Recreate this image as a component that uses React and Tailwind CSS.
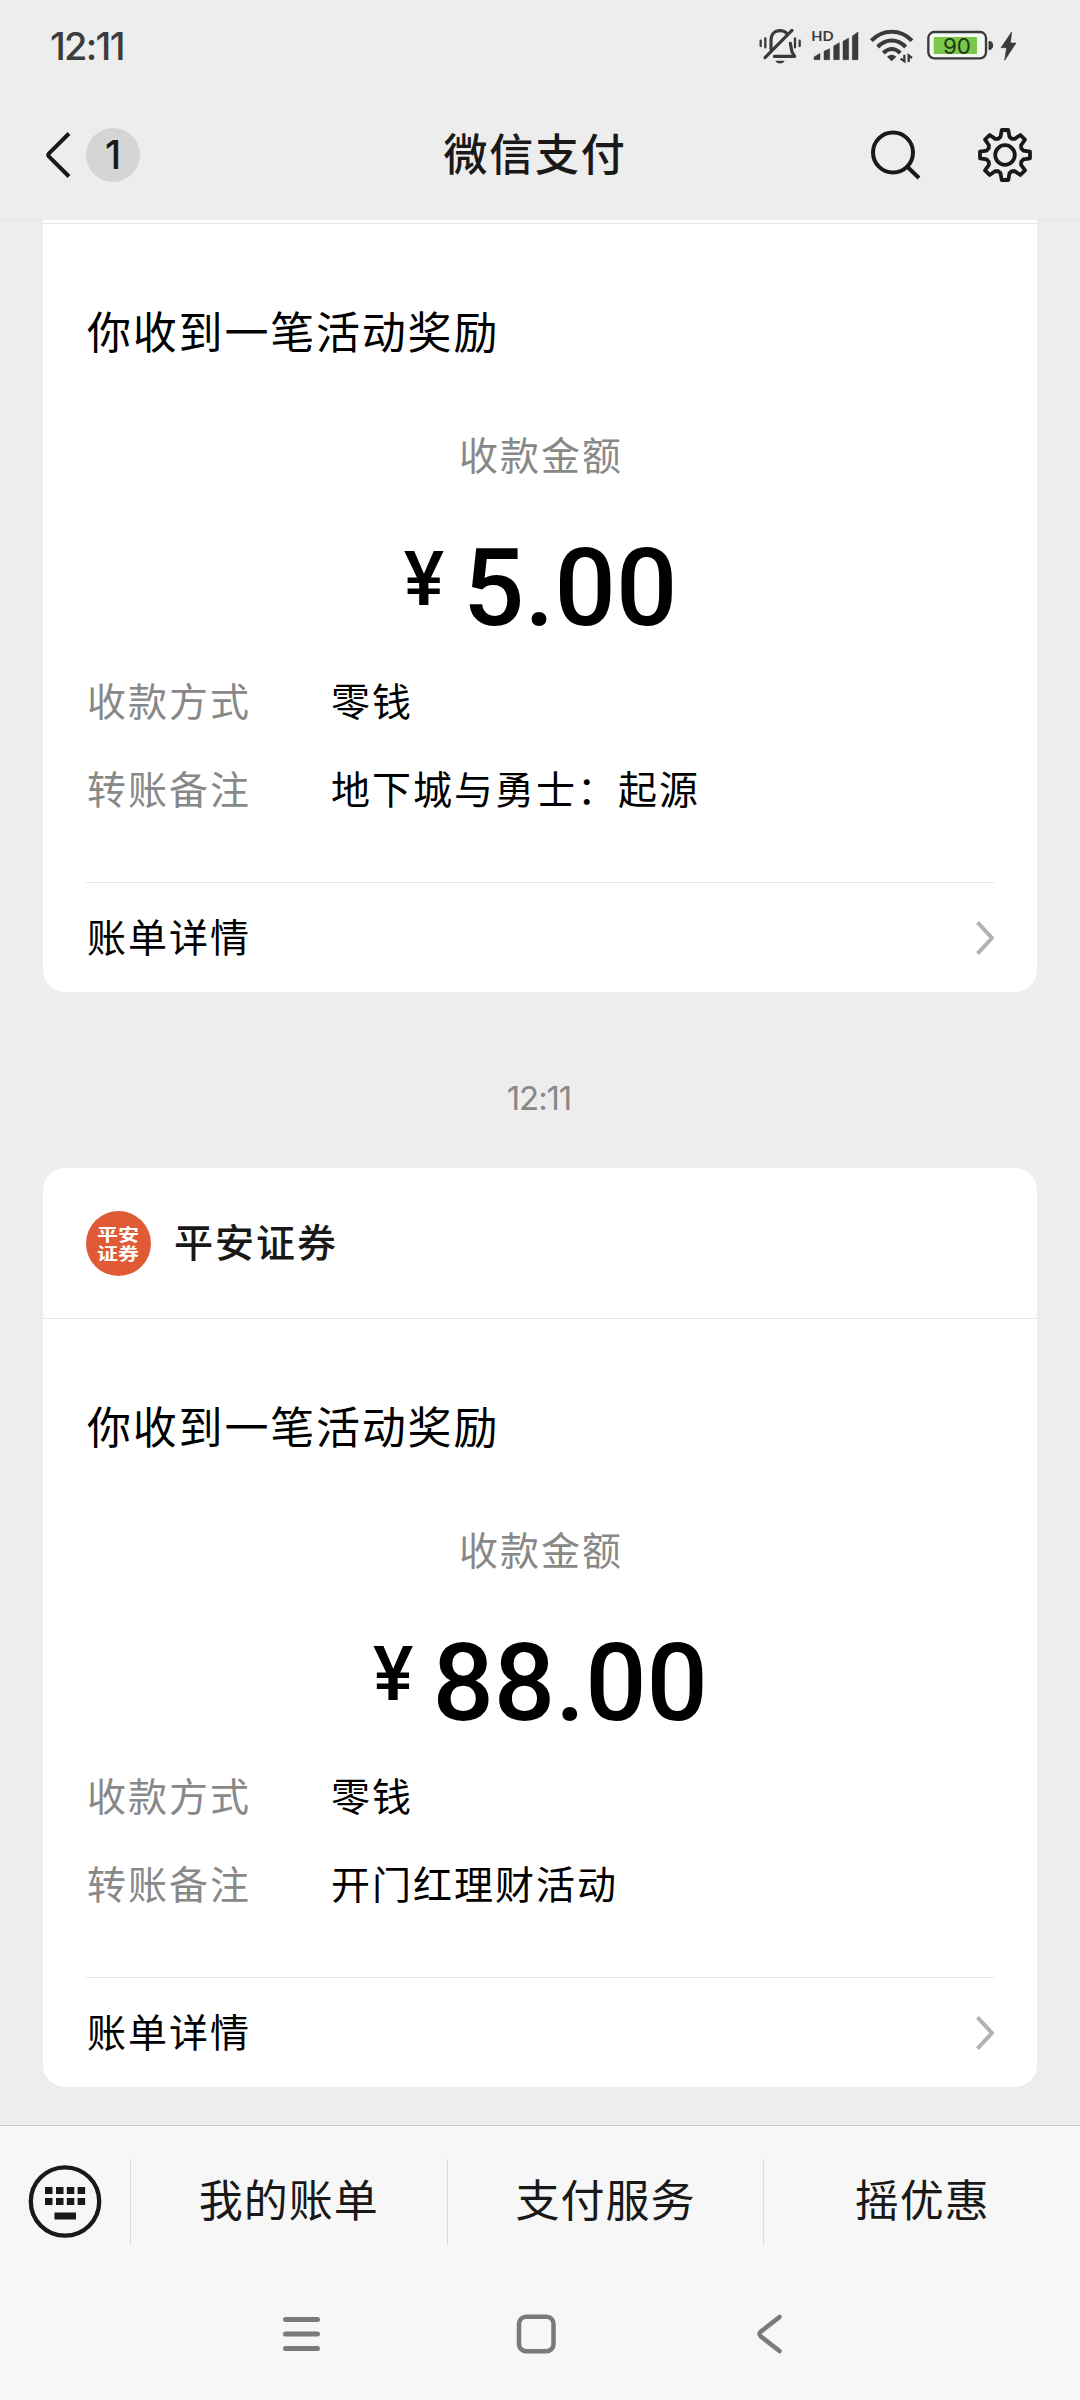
import React from "react";

const payments = [
    {
        id: 1,
        merchant: null,
        amount: "5.00",
        rows: [
            { label: "收款方式", value: "零钱" },
            { label: "转账备注", value: "地下城与勇士：起源" },
        ],
    },
    {
        id: 2,
        merchant: "平安证券",
        amount: "88.00",
        rows: [
            { label: "收款方式", value: "零钱" },
            { label: "转账备注", value: "开门红理财活动" },
        ],
    },
];

const menus = ["我的账单", "支付服务", "摇优惠"];

// gear outline: 8 teeth around (27, 27)
const gearPath = () => {
    const pts = [];
    for (let i = 0; i < 8; i++) {
        const base = (i * Math.PI) / 4 - Math.PI / 2;
        [[-0.392, 17.6], [-0.24, 18.8], [-0.13, 25.2], [0.13, 25.2], [0.24, 18.8]].forEach(([a, r]) => {
            pts.push(`${(27 + r * Math.cos(base + a)).toFixed(2)} ${(27 + r * Math.sin(base + a)).toFixed(2)}`);
        });
    }
    return `M${pts.join("L")}Z`;
};

const StatusBar = () => (
    <div className="flex h-[90px] items-start justify-between pl-[50px] pr-[40px]">
        <span className="mt-[22px] font-['Inter',sans-serif] text-[38px] font-medium leading-[48px] tracking-[-1.700px] text-[#3c3c3c]">12:11</span>
        <div className="mt-[10px] flex">
            {/* muted bell */}
            <svg width="67" height="70" viewBox="0 0 201 210" fill="none" stroke="#3a3a3c">
                <path d="M93 118V92C93 72 104 62 120 62C130 62 136 65 141 71M151 100L156 126L164 139H103" strokeWidth="9.500" strokeLinejoin="round" strokeLinecap="round" />
                <path d="M75 143L156 61" strokeWidth="9.500" strokeLinecap="round" />
                <path d="M106 152H134C130 163 110 163 106 152Z" fill="#3a3a3c" stroke="none" />
                <path d="M62 92V108M76 85V112M165 85V112M179 92V108" strokeWidth="7" strokeLinecap="round" />
            </svg>
            {/* signal */}
            <svg width="58" height="70" viewBox="201 0 174 210" fill="#3a3a3c">
                <text x="214" y="93" fontFamily="Lato, sans-serif" fontWeight="700" fontSize="41" textLength="67" lengthAdjust="spacingAndGlyphs">HD</text>
                <path d="M222 141L240 130V149H222ZM252 124L269 116V149H252ZM281 108L298 98V149H281ZM309 94L326 84V149H309ZM337 78L354 66V149H337Z" stroke="#3a3a3c" strokeWidth="1.500" strokeLinejoin="round" />
            </svg>
            {/* wifi */}
            <svg width="57" height="70" viewBox="375 0 171 210" fill="none" stroke="#3a3a3c">
                <path d="M394 92C428 56 482 56 516 92" strokeWidth="12" />
                <path d="M413 111C438 85 472 85 497 111" strokeWidth="12" />
                <path d="M430 129C447 113 464 113 481 129" strokeWidth="12" />
                <path d="M441 140Q455 128 469 140L455 154Z" fill="#3a3a3c" stroke="none" />
                <path d="M493 134V154L482 146M506 156V136L516 144" strokeWidth="7" />
            </svg>
            {/* battery */}
            <svg width="118" height="70" viewBox="546 0 354 210">
                <rect x="565" y="66" width="173" height="79" rx="18" fill="#f2f8ef" stroke="#3a3a3c" strokeWidth="7" />
                <rect x="581" y="81" width="130" height="51" rx="3" fill="#7ac74a" />
                <path d="M747 94Q758 94 758 106Q758 119 747 119Z" fill="#3a3a3c" stroke="#3a3a3c" strokeWidth="3" />
                <text x="609" y="131" fontFamily="Inter, sans-serif" fontWeight="400" fontSize="66" textLength="84" lengthAdjust="spacingAndGlyphs" fill="#1d3a12">90</text>
                <path d="M815 66L783 113H800L794 151L828 99H811Z" fill="#3a3a3c" stroke="#3a3a3c" strokeWidth="2" strokeLinejoin="round" />
            </svg>
        </div>
    </div>
);

const NavBar = () => (
    <div className="flex h-[130px] items-start justify-between pl-[42px] pr-[48px]">
        <div className="mt-[38px] flex w-[376px] items-center">
            <svg width="34" height="54" viewBox="0 0 34 54" fill="none" stroke="#191919" strokeWidth="4">
                <path d="M27 5.500L6.800 25.700Q5.500 27 6.800 28.300L27 48.500" />
            </svg>
            <span className="ml-[10px] flex h-[54px] w-[54px] items-center justify-center rounded-full bg-[#d5d5d5] font-['Inter',sans-serif] text-[39px] font-medium text-[#191919]">1</span>
        </div>
        <h1 className="mt-[32px] text-[44px] font-medium leading-[60px] tracking-[1.800px] text-[#191919]">微信支付</h1>
        <div className="mt-[38px] flex w-[380px] justify-end gap-[55px]">
            <svg width="54" height="54" viewBox="0 0 54 54" fill="none" stroke="#191919" strokeWidth="4">
                <circle cx="24" cy="24.500" r="20" />
                <path d="M38 38.500L50 50" />
            </svg>
            <svg width="54" height="54" viewBox="0 0 54 54" fill="none" stroke="#191919" strokeWidth="3.800" strokeLinejoin="round">
                <path d={gearPath()} />
                <circle cx="27" cy="27" r="9.800" />
            </svg>
        </div>
    </div>
);

const PaymentCard = ({ payment }) => (
    <div className={`mx-[43px] bg-white ${payment.merchant ? "rounded-[22px]" : "-mt-px rounded-b-[22px]"}`}>
        {payment.merchant ? (
            <div className="flex h-[150px] items-center pl-[43px]">
                <div className="flex h-[65px] w-[65px] items-center justify-center rounded-full bg-[#df5a35]">
                    <span className="w-[43px] scale-y-80 break-all text-[21px] font-bold leading-[24px] text-white">平安证券</span>
                </div>
                <span className="mb-[6px] ml-[23px] text-[39px] font-medium leading-[60px] tracking-[2px] text-[#191919]">{payment.merchant}</span>
            </div>
        ) : (
            <div className="h-[3px]" />
        )}
        <div className="h-px bg-[#e5e5e5]" />

        <div className="px-[43px] pt-[76px]">
            <p className="pl-px text-[44px] leading-[60px] tracking-[1.800px] text-black">你收到一笔活动奖励</p>
            <p className="mt-[63px] pl-[2px] text-center text-[39px] leading-[60px] tracking-[2px] text-[#888888]">收款金额</p>
            <div className="mt-[51px] flex justify-center pl-px font-['Roboto',sans-serif] font-medium leading-none text-black">
                <span className="mt-[7px] text-[76px] leading-[76px]">¥</span>
                <span className="ml-[19px] text-[108px]">{payment.amount}</span>
            </div>
            <div className="mt-[27px] flex flex-col gap-[28px]">
                {payment.rows.map((row) => (
                    <div key={row.label} className="flex pl-px text-[39px] leading-[60px] tracking-[2px]">
                        <span className="w-[244px] text-[#888888]">{row.label}</span>
                        <span className="text-black">{row.value}</span>
                    </div>
                ))}
            </div>
            <div className="mt-[65px] flex h-[110px] items-center justify-between border-t border-[#e5e5e5]">
                <span className="mb-[6px] pl-px text-[39px] leading-[60px] tracking-[2px] text-black">账单详情</span>
                <svg width="22" height="40" viewBox="0 0 22 40" fill="none" stroke="#b2b2b2" strokeWidth="4">
                    <path d="M5.500 4.300L20 20L5.500 35.700" />
                </svg>
            </div>
        </div>
    </div>
);

const BottomMenu = () => (
    <div className="flex h-[152px] items-center border-t border-[#c8c8c8]">
        <div className="flex w-[130px] justify-center">
            <svg width="74" height="74" viewBox="0 0 74 74" fill="#191919">
                <circle cx="37" cy="36.500" r="34.200" fill="none" stroke="#191919" strokeWidth="4.300" />
                {[17, 28, 38.800, 49.600].map((x) => (
                    <g key={x}>
                        <rect x={x} y="22" width="7.500" height="7" />
                        <rect x={x} y="33" width="7.500" height="7" />
                    </g>
                ))}
                <rect x="26.500" y="47.500" width="21.500" height="7" />
            </svg>
        </div>
        {menus.map((m) => (
            <div key={m} className="flex h-[86px] flex-1 items-center justify-center border-l border-[#dddddd]">
                <span className="mb-[7px] text-[44px] leading-[60px] tracking-[1px] text-[#191919]">{m}</span>
            </div>
        ))}
    </div>
);

const SystemNav = () => (
    <div className="flex h-[123px] items-start pl-[280px] pt-[35px]">
        <svg width="42" height="44" viewBox="0 0 42 44" fill="none" stroke="#7a7a7a" strokeWidth="5" strokeLinecap="round">
            <path d="M5.500 7.500H37.500M5.500 22H37.500M5.500 36.500H37.500" />
        </svg>
        <svg className="ml-[192px]" width="44" height="44" viewBox="0 0 44 44" fill="none" stroke="#7a7a7a" strokeWidth="4.500">
            <rect x="5" y="4.700" width="34.500" height="34.500" rx="7" />
        </svg>
        <svg className="ml-[196px]" width="32" height="44" viewBox="0 0 32 44" fill="none" stroke="#7a7a7a" strokeWidth="4.500" strokeLinecap="round">
            <path d="M25.500 5L7 19.500Q4 22 7 24.500L25.500 39" />
        </svg>
    </div>
);

const App = () => (
    <div className="flex h-[2400px] w-[1080px] flex-col overflow-hidden bg-[#ededed] font-['Noto_Sans_CJK_SC',sans-serif]">
        <StatusBar />
        <NavBar />
        <main className="flex-1 border-t border-[#e4e4e4]">
            <PaymentCard payment={payments[0]} />
            <div className="flex h-[176px] items-center justify-center pr-[2px] pt-[37px] font-['Inter',sans-serif] text-[33px] tracking-[-1.100px] text-[#888888]">12:11</div>
            <PaymentCard payment={payments[1]} />
        </main>
        <footer className="bg-[#f7f7f7]">
            <BottomMenu />
            <SystemNav />
        </footer>
    </div>
);

export default App;
